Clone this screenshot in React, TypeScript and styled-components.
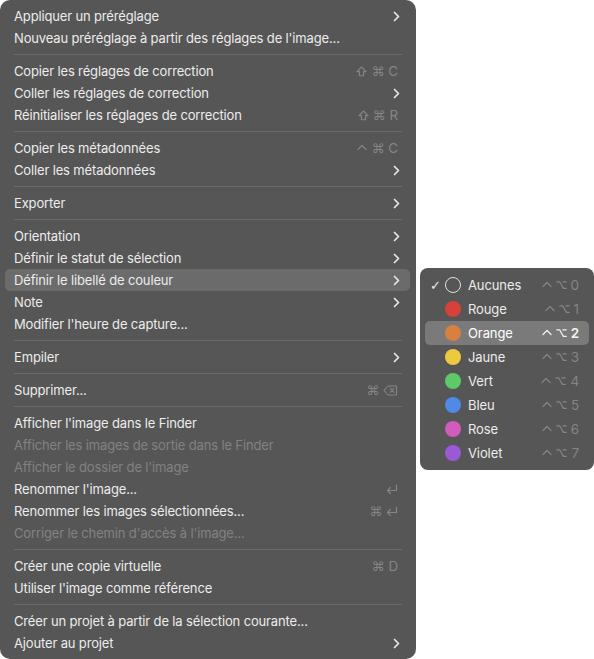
import React from "react";
import styled, { createGlobalStyle } from "styled-components";

const Global = createGlobalStyle`
  html, body { margin: 0; padding: 0; background: #ffffff; overflow: hidden; }
  body { font-family: Inter, "Noto Sans", "DejaVu Sans", sans-serif; -webkit-font-smoothing: antialiased; }
`;

const Page = styled.div`
  display: flex;
  align-items: flex-start;
  gap: 4px;
  width: 594px;
  height: 659px;
`;

const Menu = styled.div`
  box-sizing: border-box;
  width: 416px;
  height: 659px;
  background: #565656;
  border-radius: 10px;
  padding: 5px 6px 5px 5px;
  display: flex;
  flex-direction: column;
`;

const Row = styled.div<{ $active?: boolean; $disabled?: boolean }>`
  height: 22px;
  display: flex;
  align-items: center;
  padding: 0 10px 0 9px;
  border-radius: 5px;
  background: ${(p) => (p.$active ? "#6b6b6b" : "transparent")};
  color: ${(p) => (p.$disabled ? "#828282" : "#ececec")};
  font-size: 13px;
  letter-spacing: -0.15px;
  white-space: nowrap;
`;

const Label = styled.span`
  flex: 1;
`;

const Sep = styled.div`
  height: 11px;
  display: flex;
  align-items: center;
  padding: 0 8px 0 9px;
  &::after {
    content: "";
    flex: 1;
    height: 1px;
    background: #6a6a6a;
  }
`;

const Keys = styled.span<{ $bright?: boolean }>`
  display: flex;
  align-items: center;
  gap: 4px;
  color: ${(p) => (p.$bright ? "#f4f4f4" : "#858585")};
  font-size: 13.5px;
  margin-right: 2px;
  font-weight: ${(p) => (p.$bright ? 600 : 400)};
`;

const Glyph = styled.span`
  font-family: "DejaVu Sans", sans-serif;
  font-size: 13px;
  line-height: 1;
`;

const Chevron = () => (
  <svg width="7" height="11" viewBox="0 0 7 11">
    <path d="M1.5 1.5 L5.5 5.5 L1.5 9.5" fill="none" stroke="#e8e8e8" strokeWidth="1.7" strokeLinecap="round" strokeLinejoin="round" />
  </svg>
);

const Sub = styled.div`
  box-sizing: border-box;
  margin-top: 268px;
  width: 174px;
  background: #565656;
  border-radius: 8px;
  padding: 5px;
  display: flex;
  flex-direction: column;
`;

const SubRow = styled.div<{ $active?: boolean }>`
  height: 24px;
  display: flex;
  align-items: center;
  padding: 0 8px 0 5px;
  border-radius: 5px;
  background: ${(p) => (p.$active ? "#7a7a7a" : "transparent")};
  color: ${(p) => (p.$active ? "#ffffff" : "#ececec")};
  font-size: 13px;
  letter-spacing: -0.1px;
`;

const Check = styled.span`
  width: 15px;
  font-family: "DejaVu Sans", sans-serif;
  font-size: 13px;
  color: #ececec;
`;

const Dot = styled.span<{ $color?: string }>`
  box-sizing: border-box;
  width: 16px;
  height: 16px;
  border-radius: 50%;
  margin-right: 7px;
  background: ${(p) => p.$color || "transparent"};
  border: ${(p) => (p.$color ? "none" : "1px solid #e0e0e0")};
`;

const Ctrl = () => (
  <svg width="10" height="10" viewBox="0 0 10 10">
    <path d="M1 6.5 L5 2.5 L9 6.5" fill="none" stroke="currentColor" strokeWidth="1.2" strokeLinecap="round" strokeLinejoin="round" />
  </svg>
);

const Opt = () => (
  <svg width="11" height="10" viewBox="0 0 11 10">
    <path d="M0.8 1.8 H3.6 L7.4 8.4 H10.2 M6.8 1.8 H10.2" fill="none" stroke="currentColor" strokeWidth="1.2" strokeLinecap="round" strokeLinejoin="round" />
  </svg>
);

const Shift = () => (
  <svg width="11" height="11" viewBox="0 0 11 11">
    <path d="M5.5 1 L10 5.6 H7.6 V9.8 H3.4 V5.6 H1 Z" fill="none" stroke="currentColor" strokeWidth="1.1" strokeLinejoin="round" />
  </svg>
);

const Ret = () => (
  <svg width="12" height="11" viewBox="0 0 12 11">
    <path d="M10.5 1 V6.5 H1.5 M4.5 3.5 L1.5 6.5 L4.5 9.5" fill="none" stroke="currentColor" strokeWidth="1.2" strokeLinecap="round" strokeLinejoin="round" />
  </svg>
);

const Del = () => (
  <svg width="15" height="11" viewBox="0 0 15 11">
    <path d="M5 1 H13.5 V10 H5 L1 5.5 Z" fill="none" stroke="currentColor" strokeWidth="1.1" strokeLinejoin="round" />
    <path d="M7.3 3.3 L11 7.4 M11 3.3 L7.3 7.4" stroke="currentColor" strokeWidth="1.1" strokeLinecap="round" />
  </svg>
);

type Item =
  | { sep: true }
  | { label: string; sub?: boolean; keys?: React.ReactNode[]; disabled?: boolean; active?: boolean };

const items: Item[] = [
  { label: "Appliquer un préréglage", sub: true },
  { label: "Nouveau préréglage à partir des réglages de l'image..." },
  { sep: true },
  { label: "Copier les réglages de correction", keys: [<Shift key="s" />, "⌘", "C"] },
  { label: "Coller les réglages de correction", sub: true },
  { label: "Réinitialiser les réglages de correction", keys: [<Shift key="s" />, "⌘", "R"] },
  { sep: true },
  { label: "Copier les métadonnées", keys: [<Ctrl key="c" />, "⌘", "C"] },
  { label: "Coller les métadonnées", sub: true },
  { sep: true },
  { label: "Exporter", sub: true },
  { sep: true },
  { label: "Orientation", sub: true },
  { label: "Définir le statut de sélection", sub: true },
  { label: "Définir le libellé de couleur", sub: true, active: true },
  { label: "Note", sub: true },
  { label: "Modifier l'heure de capture..." },
  { sep: true },
  { label: "Empiler", sub: true },
  { sep: true },
  { label: "Supprimer...", keys: ["⌘", <Del key="d" />] },
  { sep: true },
  { label: "Afficher l'image dans le Finder" },
  { label: "Afficher les images de sortie dans le Finder", disabled: true },
  { label: "Afficher le dossier de l'image", disabled: true },
  { label: "Renommer l'image...", keys: [<Ret key="r" />] },
  { label: "Renommer les images sélectionnées...", keys: ["⌘", <Ret key="r" />] },
  { label: "Corriger le chemin d'accès à l'image...", disabled: true },
  { sep: true },
  { label: "Créer une copie virtuelle", keys: ["⌘", "D"] },
  { label: "Utiliser l'image comme référence" },
  { sep: true },
  { label: "Créer un projet à partir de la sélection courante..." },
  { label: "Ajouter au projet", sub: true },
];

const colors = [
  { name: "Aucunes", color: undefined as string | undefined, check: true },
  { name: "Rouge", color: "#d8403a" },
  { name: "Orange", color: "#d9803f", active: true },
  { name: "Jaune", color: "#ecc93f" },
  { name: "Vert", color: "#5dca6a" },
  { name: "Bleu", color: "#4f8ae7" },
  { name: "Rose", color: "#d35bbd" },
  { name: "Violet", color: "#9a5ad6" },
];

const renderKeys = (keys: React.ReactNode[], bright?: boolean) => (
  <Keys $bright={bright}>
    {keys.map((k, i) =>
      typeof k === "string" && /[A-Z0-9]/.test(k) ? <span key={i}>{k}</span> : typeof k === "string" ? <Glyph key={i}>{k}</Glyph> : k
    )}
  </Keys>
);

export default function App() {
  return (
    <>
      <Global />
      <Page>
        <Menu>
          {items.map((it, i) =>
            "sep" in it ? (
              <Sep key={i} />
            ) : (
              <Row key={i} $active={it.active} $disabled={it.disabled}>
                <Label>{it.label}</Label>
                {it.keys && renderKeys(it.keys)}
                {it.sub && <Chevron />}
              </Row>
            )
          )}
        </Menu>
        <Sub>
          {colors.map((c, i) => (
            <SubRow key={c.name} $active={c.active}>
              <Check>{c.check ? "✓" : ""}</Check>
              <Dot $color={c.color} />
              <Label>{c.name}</Label>
              {renderKeys([<Ctrl key="c" />, <Opt key="o" />, String(i)], c.active)}
            </SubRow>
          ))}
        </Sub>
      </Page>
    </>
  );
}
